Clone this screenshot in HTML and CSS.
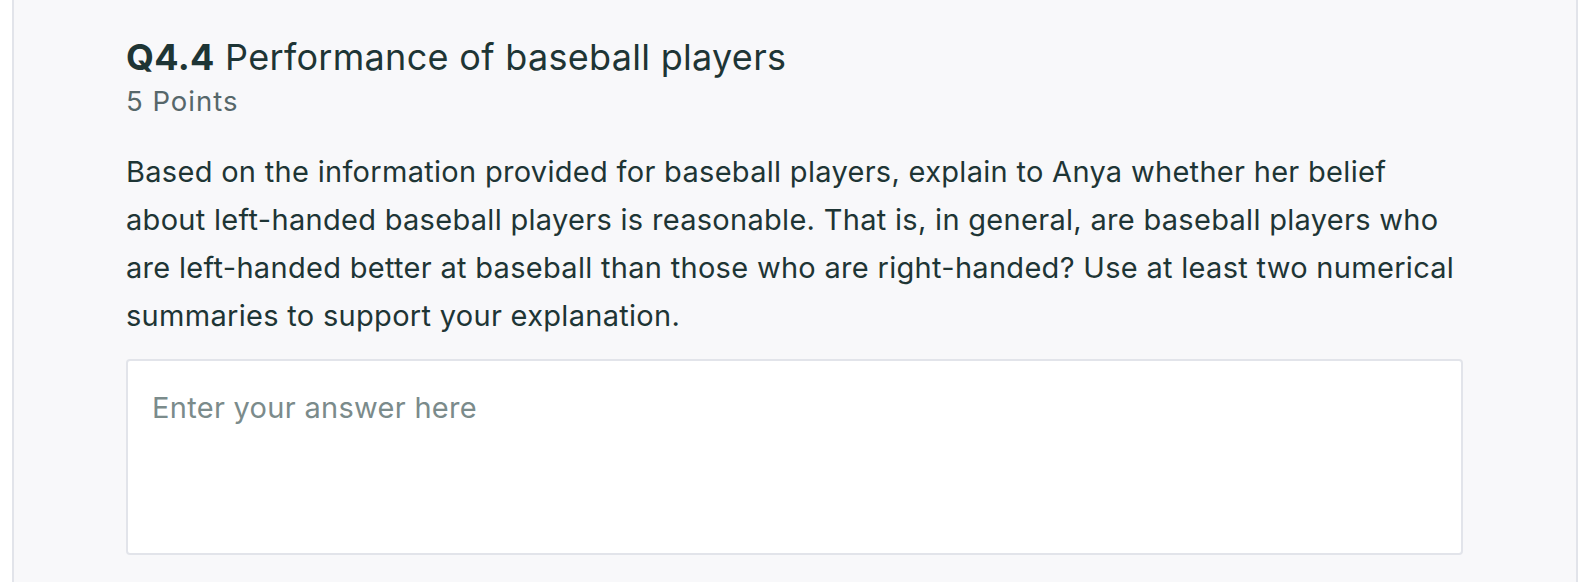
FILE: index.html
```html
<!DOCTYPE html>
<html>
<head>
<meta charset="utf-8">
<link rel="stylesheet" href="styles.css">
</head>
<body>
<div class="panel">
  <h2 class="q-title"><span class="q-num">Q4.4</span> Performance of baseball players</h2>
  <div class="q-points">5 Points</div>
  <p class="q-body">Based on the information provided for baseball players, explain to Anya whether her belief<br>about left-handed baseball players is reasonable. That is, in general, are baseball players who<br>are left-handed better at baseball than those who are right-handed? Use at least two numerical<br>summaries to support your explanation.</p>
  <textarea class="answer" placeholder="Enter your answer here"></textarea>
</div>
</body>
</html>
```
FILE: styles.css
```css
html, body {
  margin: 0;
  padding: 0;
  background: #ffffff;
}
body {
  font-family: Inter, "Noto Sans", sans-serif;
  color: #1e3535;
}
.panel {
  margin-left: 12px;
  height: 582px;
  box-sizing: border-box;
  border-left: 2px solid #e2e4ea;
  border-right: 2px solid #e2e4ea;
  background: #f8f8fa;
  padding: 36px 113px 0 112px;
}
.q-title {
  margin: 0;
  font-size: 36px;
  line-height: 42px;
  font-weight: 400;
  letter-spacing: 0.3px;
}
.q-num {
  font-weight: 700;
}
.q-points {
  margin-top: 7px;
  font-size: 27.5px;
  line-height: 32px;
  letter-spacing: 1px;
  color: #56676a;
}
.q-body {
  margin: 31px 0 0 0;
  font-size: 29px;
  line-height: 48px;
  letter-spacing: 0.3px;
  white-space: nowrap;
}
.answer {
  display: block;
  margin-top: 19px;
  width: 100%;
  height: 196px;
  box-sizing: border-box;
  border: 2px solid #e2e4ea;
  border-radius: 4px;
  background: #ffffff;
  padding: 29px 24px;
  font-family: Inter, "Noto Sans", sans-serif;
  font-size: 29px;
  line-height: 35px;
  letter-spacing: 0.3px;
  color: #1e3535;
  resize: none;
  outline: none;
}
.answer::placeholder {
  color: #7b8b8b;
  opacity: 1;
}
```
